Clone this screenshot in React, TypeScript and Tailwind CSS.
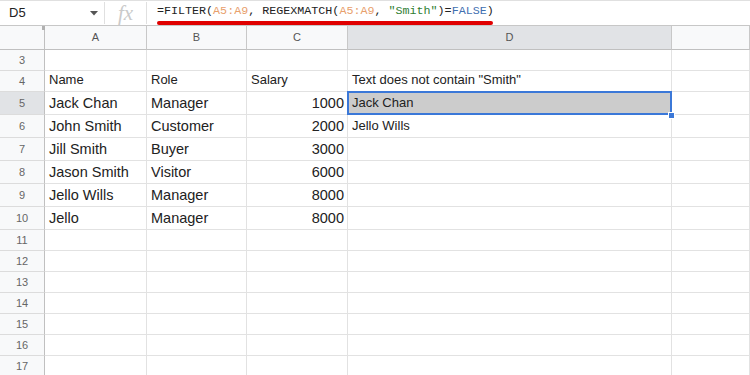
import React from "react";

const cols = [45, 102, 100, 101, 324, 78];
const colLetters = ["A", "B", "C", "D", ""];

type Row = { n: number; h: number; cells: (string | null)[]; hdr?: boolean };

const rows: Row[] = [
  { n: 3, h: 21, cells: ["", "", "", "", ""] },
  { n: 4, h: 21, cells: ["Name", "Role", "Salary", 'Text does not contain "Smith"', ""], hdr: true },
  { n: 5, h: 23, cells: ["Jack Chan", "Manager", "1000", "Jack Chan", ""] },
  { n: 6, h: 23, cells: ["John Smith", "Customer", "2000", "Jello Wills", ""] },
  { n: 7, h: 23, cells: ["Jill Smith", "Buyer", "3000", "", ""] },
  { n: 8, h: 23, cells: ["Jason Smith", "Visitor", "6000", "", ""] },
  { n: 9, h: 23, cells: ["Jello Wills", "Manager", "8000", "", ""] },
  { n: 10, h: 23, cells: ["Jello", "Manager", "8000", "", ""] },
  { n: 11, h: 21, cells: ["", "", "", "", ""] },
  { n: 12, h: 21, cells: ["", "", "", "", ""] },
  { n: 13, h: 21, cells: ["", "", "", "", ""] },
  { n: 14, h: 21, cells: ["", "", "", "", ""] },
  { n: 15, h: 21, cells: ["", "", "", "", ""] },
  { n: 16, h: 21, cells: ["", "", "", "", ""] },
  { n: 17, h: 21, cells: ["", "", "", "", ""] },
];

export default function App() {
  const template = cols.map((c) => `${c}px`).join(" ");
  return (
    <div
      className="w-[750px] h-[375px] overflow-hidden bg-white text-[#222]"
      style={{ fontFamily: '"Liberation Sans", Arial, sans-serif' }}
    >
      {/* Formula bar */}
      <div className="h-[26px] flex items-center border-t border-[#e0e0e0] border-b border-b-[#c7c7c7] relative">
        <div className="w-[104px] h-full flex items-center pl-[9px] pr-[8px] justify-between">
          <span className="text-[13px] text-[#222]">D5</span>
          <svg width="8" height="5" viewBox="0 0 8 5" className="mr-[-2px]">
            <path d="M0 0 L8 0 L4 4.5 Z" fill="#555" />
          </svg>
        </div>
        <div className="w-px h-[22px] bg-[#e0e0e0]" />
        <div className="w-[41px] h-full flex items-center justify-center">
          <span
            className="text-[21px] italic text-[#cacaca] leading-none"
            style={{ fontFamily: '"Liberation Serif", serif' }}
          >
            fx
          </span>
        </div>
        <div className="w-px h-[22px] bg-[#e0e0e0]" />
        <div className="relative pl-[10px] h-full flex items-center">
          <span
            className="text-[11.7px] whitespace-pre text-[#222] relative top-[-1px]"
            style={{ fontFamily: '"Liberation Mono", monospace' }}
          >
            =FILTER(<span className="text-[#e8a06c]">A5:A9</span>, REGEXMATCH(
            <span className="text-[#e8a06c]">A5:A9</span>,{" "}
            <span className="text-[#2f7d32]">"Smith"</span>)=
            <span className="text-[#3f6fb0]">FALSE</span>)
          </span>
          <div className="absolute left-[10px] top-[20px] w-[336px] h-[4px] rounded-full bg-[#e00000]" />
        </div>
      </div>

      {/* Grid */}
      <div className="grid" style={{ gridTemplateColumns: template }}>
        {/* column headers */}
        <div className="relative h-[24px] bg-[#f8f9fa] border-r border-r-[#c0c0c0] border-b border-b-[#c0c0c0]">
          <div className="absolute right-[-1px] top-0 w-[3px] h-[4px] bg-[#b0b0b0]" />
        </div>
        {colLetters.map((l, i) => (
          <div
            key={i}
            className={`h-[24px] flex items-center justify-center text-[11px] text-[#555] border-r border-r-[#c8c8c8] border-b border-b-[#c0c0c0] ${
              i === 3 ? "bg-[#e1e3e6]" : "bg-[#f8f9fa]"
            }`}
          >
            {l}
          </div>
        ))}

        {rows.map((r) => (
          <React.Fragment key={r.n}>
            <div
              className={`flex items-center justify-center text-[11px] text-[#666] border-r border-r-[#c0c0c0] border-b border-b-[#dcdcdc] ${
                r.n === 5 ? "bg-[#e1e3e6]" : "bg-[#f8f9fa]"
              }`}
              style={{ height: r.h }}
            >
              {r.n}
            </div>
            {r.cells.map((c, i) => {
              const isNum = i === 2 && !r.hdr && c !== "";
              const small = r.hdr || i === 3;
              const selected = r.n === 5 && i === 3;
              return (
                <div
                  key={i}
                  className={`relative flex items-end pb-[1px] border-r border-r-[#e2e2e2] border-b border-b-[#e2e2e2] whitespace-nowrap overflow-visible ${
                    isNum ? "justify-end pr-[3px]" : "pl-[4px]"
                  } ${small ? "text-[13px]" : "text-[14.5px]"} ${selected ? "bg-[#cccccc] z-10" : ""}`}
                  style={{ height: r.h }}
                >
                  <span className="leading-[20px]">{c}</span>
                  {selected && (
                    <>
                      <div className="absolute left-[-1px] top-[-1px] right-[-1px] bottom-[-1px] border-2 border-[#3b78d8]" />
                      <div className="absolute right-[-4px] bottom-[-5px] w-[7px] h-[7px] bg-[#3b78d8] border border-white" />
                    </>
                  )}
                </div>
              );
            })}
          </React.Fragment>
        ))}
      </div>
    </div>
  );
}
